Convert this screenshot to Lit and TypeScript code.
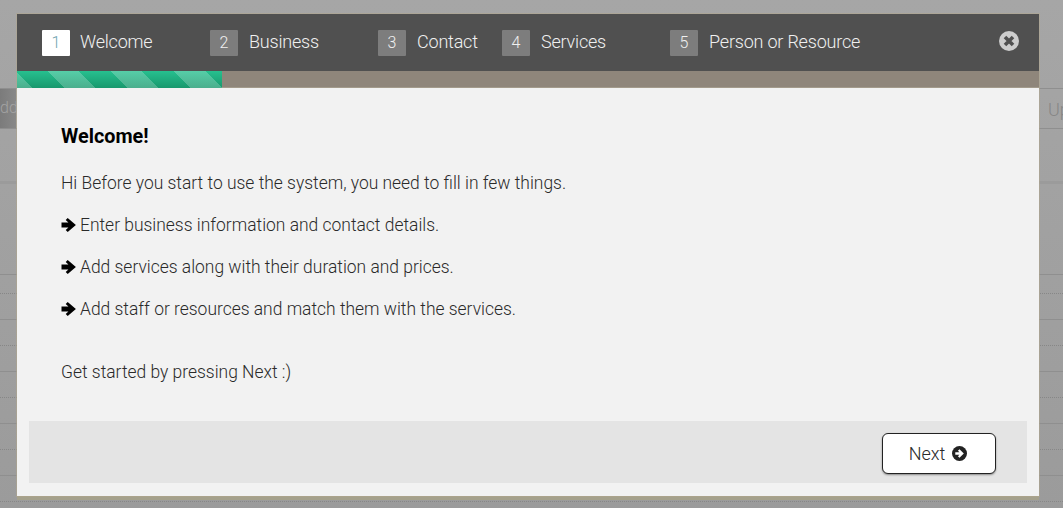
import { LitElement, html, css, svg } from "lit";
import { customElement } from "lit/decorators.js";

const steps = [
  { n: 1, label: "Welcome", w: 168 },
  { n: 2, label: "Business", w: 168 },
  { n: 3, label: "Contact", w: 124 },
  { n: 4, label: "Services", w: 168 },
  { n: 5, label: "Person or Resource", w: 200 },
];

const solid = [88, 128, 274, 319, 371, 423, 475];
const dotted = [293, 345, 397, 449, 501];

const arrow = svg`<svg class="arrow" viewBox="0 0 16 16" width="16" height="16"><path d="M0.5 5.6H7.4L4.7 2.9L6.7 0.9L14.9 8L6.7 15.1L4.7 13.1L7.4 10.4H0.5Z" fill="#000"/></svg>`;

@customElement("app-root")
export class AppRoot extends LitElement {
  static styles = css`
    :host { display: block; width: 1063px; height: 508px; position: relative; overflow: hidden; background: linear-gradient(#a6a6a6, #9b9b9b); font-family: Roboto, "Liberation Sans", sans-serif; }
    .backdrop { position: absolute; inset: 0; }
    .bg-btn { position: absolute; left: 0; top: 88px; width: 16px; height: 40px; background: linear-gradient(90deg, #7b7b7b, #888); color: #a3a3a3; font-size: 16px; line-height: 40px; font-weight: 300; text-align: right; overflow: hidden; }
    .bg-up { position: absolute; left: 1048px; top: 99px; color: #868686; font-size: 18px; font-weight: 300; }
    .band { position: absolute; left: 0; right: 0; top: 181px; height: 3px; background: #9b9b9b; }
    .line { position: absolute; left: 0; right: 0; height: 1px; background: #8f8f8f; }
    .line.dot { background: none; border-top: 1px dotted #878787; }
    .page { position: relative; padding: 14px 24px 12px 17px; box-sizing: border-box; height: 508px; }
    .modal { height: 482px; display: flex; flex-direction: column; box-shadow: 0 0 0 1px rgba(176,166,140,.55), 0 4px 0 0 #a5a18c; background: #f2f2f2; }
    .head { height: 57px; background: #505050; display: flex; align-items: center; padding-left: 25px; position: relative; flex: none; }
    .step { display: flex; align-items: center; gap: 11px; color: #f0f0f0; font-size: 18px; font-weight: 300; letter-spacing: -0.2px; }
    .step.active { gap: 10px; }
    .label { margin-bottom: 2px; }
    .num { width: 28px; height: 26px; border-radius: 1px; background: #7d7d7d; color: #f0f0f0; font-size: 16px; display: flex; align-items: center; justify-content: center; letter-spacing: 0; }
    .step.active .num { background: #fff; color: #6fa3b0; }
    .close { position: absolute; right: 20px; top: 17px; width: 20px; height: 20px; }
    .progress { height: 16px; background: #8f867b; flex: none; border-bottom: 1px solid #a39b8c; }
    .bar { width: 205px; height: 17px; background:
      repeating-linear-gradient(45deg, rgba(255,255,255,.22) 0 11px, transparent 11px 33.4px, rgba(255,255,255,.22) 33.4px 44.7px),
      linear-gradient(#27c08f, #18986d); }
    .body { flex: 1; padding: 37px 44px 0; color: #2a2a2a; font-size: 17.45px; font-weight: 300; }
    h2 { margin: 0 0 23px; font-size: 19.8px; font-weight: 700; line-height: 24px; color: #000; }
    p { margin: 0 0 20px; line-height: 22px; display: flex; align-items: center; gap: 3px; }
    p.last { margin-top: 41px; }
    .arrow { flex: none; }
    .foot { flex: none; height: 62px; box-sizing: border-box; margin: 0 12px 13px; background: #e4e4e4; display: flex; align-items: flex-start; justify-content: flex-end; padding: 12px 31px 0 0; }
    .next { width: 114px; height: 41px; box-sizing: border-box; background: #fff; border: 1px solid #222; border-radius: 6px; box-shadow: 0 1px 2px rgba(0,0,0,.4); display: flex; align-items: center; justify-content: center; gap: 7px; font: 300 18px Roboto, "Liberation Sans", sans-serif; color: #2a2a2a; padding: 0 2px 0 0; }
  `;

  render() {
    return html`
      <div class="backdrop">
        <div class="band"></div>
        <div class="bg-btn">dd</div>
        <div class="bg-up">Up</div>
        ${solid.map((y) => html`<div class="line" style="top:${y}px"></div>`)}
        ${dotted.map((y) => html`<div class="line dot" style="top:${y}px"></div>`)}
      </div>
      <div class="page">
        <div class="modal">
          <div class="head">
            ${steps.map(
              (s) => html`<div class="step ${s.n === 1 ? "active" : ""}" style="width:${s.w}px"><span class="num">${s.n}</span><span class="label">${s.label}</span></div>`
            )}
            <svg class="close" viewBox="0 0 20 20"><circle cx="10" cy="10" r="10" fill="#cdcdcd"/><path d="M6 6L14 14M14 6L6 14" stroke="#505050" stroke-width="3.6"/></svg>
          </div>
          <div class="progress"><div class="bar"></div></div>
          <div class="body">
            <h2>Welcome!</h2>
            <p>Hi Before you start to use the system, you need to fill in few things.</p>
            <p>${arrow}<span>Enter business information and contact details.</span></p>
            <p>${arrow}<span>Add services along with their duration and prices.</span></p>
            <p>${arrow}<span>Add staff or resources and match them with the services.</span></p>
            <p class="last">Get started by pressing Next :)</p>
          </div>
          <div class="foot">
            <button class="next">Next
              <svg viewBox="0 0 16 16" width="15" height="15"><circle cx="8" cy="8" r="8" fill="#222"/><path d="M3.5 6.7H8L6.3 5L8 3.4L12.6 8L8 12.6L6.3 11L8 9.3H3.5Z" fill="#fff"/></svg>
            </button>
          </div>
        </div>
      </div>
    `;
  }
}
